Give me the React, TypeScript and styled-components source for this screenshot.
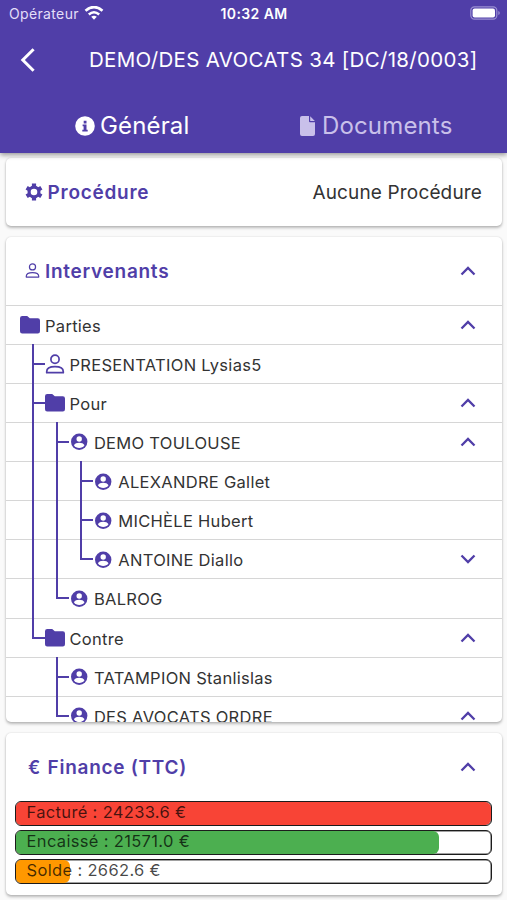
import React from "react";
import styled, { createGlobalStyle } from "styled-components";

const PURPLE = "#503ea8";

const GlobalStyle = createGlobalStyle`
  * { box-sizing: border-box; }
  html, body { margin: 0; padding: 0; }
  body {
    background: #fafafa;
    font-family: Inter, Roboto, sans-serif;
    color: #333;
    overflow: hidden;
  }
`;

const Screen = styled.div`
  width: 507px;
  height: 900px;
  display: flex;
  flex-direction: column;
  overflow: hidden;
`;

const Header = styled.header`
  flex: none;
  height: 152.5px;
  background: ${PURPLE};
  color: #fff;
  box-shadow: 0 2px 5px rgba(0, 0, 0, 0.4);
  z-index: 1;
`;

const StatusBar = styled.div`
  height: 28px;
  padding: 0 7px 0 9px;
  display: grid;
  grid-template-columns: 1fr auto 1fr;
  align-items: center;
`;

const Carrier = styled.div`
  display: flex;
  align-items: center;
  gap: 5px;
  margin-top: -1px;
  font-size: 14px;
  letter-spacing: 0.35px;
  color: #e4def8;
`;

const Clock = styled.div`
  padding-right: 1px;
  margin-top: -1px;
  font-size: 14px;
  font-weight: 600;
  letter-spacing: 0.4px;
`;

const Battery = styled.div`
  display: flex;
  justify-content: flex-end;
  margin-top: -2px;
`;

const TitleBar = styled.div`
  height: 63px;
  padding-left: 20px;
  display: flex;
  align-items: center;
`;

const BackButton = styled.button`
  width: 69px;
  height: 40px;
  padding: 0;
  border: 0;
  background: none;
  color: inherit;
  display: flex;
  align-items: center;
`;

const Title = styled.h1`
  margin: 0;
  font-size: 20.5px;
  font-weight: 400;
  letter-spacing: 0.31px;
  white-space: nowrap;
`;

const Tabs = styled.nav`
  display: grid;
  grid-template-columns: 1fr 1fr;
  height: 61px;
  padding-top: 8px;
`;

const Tab = styled.div<{ $active?: boolean; $gap: number; $shift: number }>`
  display: flex;
  align-items: center;
  gap: ${(p) => p.$gap}px;
  padding-left: ${(p) => p.$shift}px;
  font-size: 24px;
  letter-spacing: 0.15px;
  color: ${(p) => (p.$active ? "#fff" : "#c9c0ea")};
`;

const Content = styled.main`
  flex: 1;
  min-height: 0;
  padding: 5px 5px 6px 6px;
  display: flex;
  flex-direction: column;
  gap: 11px;
`;

const Card = styled.section<{ $height: number }>`
  flex: none;
  height: ${(p) => p.$height}px;
  background: #fff;
  border-radius: 5px;
  box-shadow: 0 2px 3px rgba(0, 0, 0, 0.25), 0 0 2px rgba(0, 0, 0, 0.14);
  overflow: hidden;
`;

const CardHeader = styled.div<{ $height: number }>`
  height: ${(p) => p.$height}px;
  padding: 0 19px;
  display: flex;
  align-items: center;
`;

const CardIcon = styled.span<{ $width: number }>`
  width: ${(p) => p.$width}px;
  display: flex;
  color: ${PURPLE};
`;

const EuroSign = styled.span`
  padding-left: 3px;
  font-size: 18px;
  font-weight: 600;
`;

const CardTitle = styled.h2`
  flex: 1;
  margin: 0;
  padding-top: 1px;
  font-size: 19px;
  font-weight: 600;
  letter-spacing: 0.72px;
  color: ${PURPLE};
`;

const CardValue = styled.span`
  padding: 1px 1px 0 0;
  font-size: 19px;
  letter-spacing: 0.15px;
`;

const ChevronBox = styled.span`
  width: 30px;
  margin-left: auto;
  padding-right: 1px;
  display: flex;
  justify-content: center;
  align-self: center;
  color: ${PURPLE};
`;

const TreeRow = styled.div<{ $level: number }>`
  height: 39.14px;
  border-top: 1px solid #d6d6d6;
  padding-left: ${(p) => (p.$level === 0 ? 14 : 25.5)}px;
  padding-right: 19px;
  display: flex;
`;

const Trunk = styled.span`
  flex: none;
  width: 24.4px;
  margin-top: -1px;
  border-left: 2px solid ${PURPLE};
`;

const TrunkGap = styled.span`
  flex: none;
  width: 24.4px;
`;

const Branch = styled.span`
  flex: none;
  width: 13px;
  margin-top: -1px;
  display: flex;
  flex-direction: column;
`;

const BranchTop = styled.span`
  height: 21px;
  border-left: 2px solid ${PURPLE};
  border-bottom: 2px solid ${PURPLE};
`;

const BranchBottom = styled.span`
  flex: 1;
  border-left: 2px solid ${PURPLE};
`;

const NodeIcon = styled.span`
  flex: none;
  width: 25px;
  height: 39px;
  display: flex;
  align-items: center;
  color: ${PURPLE};
`;

const NodeLabel = styled.span`
  font-size: 16.5px;
  line-height: 40px;
  letter-spacing: 0.29px;
  white-space: nowrap;
`;

const Bars = styled.div`
  margin-top: -1px;
  padding: 0 10px 0 9px;
  display: flex;
  flex-direction: column;
  gap: 4.3px;
`;

const Bar = styled.div<{ $color: string; $ratio: number }>`
  height: 25px;
  border: 1px solid #1c1c1c;
  box-shadow: inset 0 0 0 0.5px #444;
  border-radius: 6px;
  overflow: hidden;
  display: grid;
  & > * { grid-area: 1 / 1; }
  &::before {
    content: "";
    grid-area: 1 / 1;
    width: ${(p) => p.$ratio * 100}%;
    background: ${(p) => p.$color};
    border-radius: 4px 6px 6px 4px;
  }
`;

const BarLabel = styled.span`
  padding-left: 10.6px;
  font-size: 16.5px;
  line-height: 21px;
  letter-spacing: 0.33px;
  color: rgba(0, 0, 0, 0.72);
`;

const WifiIcon = () => (
  <svg width="20" height="15" viewBox="0 0 20 15" fill="none" stroke="#fff">
    <path d="M1.5 4.7 Q10 -2.5 18.5 4.7" strokeWidth="2.7" />
    <path d="M4.8 8.5 Q10 4.1 15.2 8.5" strokeWidth="2.5" />
    <path d="M7.2 10.8 Q10 8.7 12.8 10.8 L10 13.8Z" fill="#fff" stroke="none" />
  </svg>
);

const BatteryIcon = () => (
  <svg width="30" height="14" viewBox="0 0 30 14">
    <rect x="0.8" y="0.8" width="26" height="12.4" rx="3.6" fill="none" stroke="#9a8fd2" strokeWidth="1.2" />
    <rect x="2.6" y="2.5" width="22.4" height="9" rx="2" fill="#fff" />
    <path d="M28.3 5v4q1.5-.7 1.5-2t-1.5-2z" fill="#9a8fd2" />
  </svg>
);

const BackIcon = () => (
  <svg width="16" height="24" viewBox="0 0 16 24" fill="none" stroke="currentColor" strokeWidth="3">
    <path d="M13.6 1.2 2.8 12l10.8 10.8" />
  </svg>
);

const InfoIcon = () => (
  <svg width="20" height="20" viewBox="0 0 20 20">
    <circle cx="10" cy="10" r="9.8" fill="#fff" />
    <path d="M8.7 4.7h2.8v2.7H8.7zM7.6 8.5h3.9v5.2h1.2v1.7H7.3v-1.7h1.3v-3.5h-1z" fill={PURPLE} />
  </svg>
);

const FileIcon = () => (
  <svg width="15" height="20" viewBox="0 0 15 20" fill="currentColor">
    <path d="M2 0h7v5.2q0 1 1 1h5V18q0 2-2 2H2q-2 0-2-2V2q0-2 2-2z" />
    <path d="M10.2.2 14.8 5h-4.6z" />
  </svg>
);

const GearIcon = () => (
  <svg width="18" height="18" viewBox="0 0 18 18" fill="none" stroke="currentColor">
    <circle cx="9" cy="9" r="4.9" strokeWidth="3.2" />
    <path
      d="M9 3.4V.5M9 14.6v2.900M4.150 6.200 1.640 4.750M13.850 11.800l2.510 1.450M4.150 11.800l-2.510 1.450M13.850 6.200l2.510-1.450"
      strokeWidth="4.200"
    />
  </svg>
);

const PersonIcon = ({ size, stroke }: { size: number; stroke: number }) => (
  <svg width={size} height={size} viewBox="0 0 20 20" fill="none" stroke="currentColor" strokeWidth={stroke}>
    <circle cx="10" cy="5.2" r="4.1" />
    <path d="M1.700 18.700v-1c0-3.300 3-5 8.300-5s8.300 1.700 8.300 5v1z" strokeLinejoin="round" />
  </svg>
);

const FolderIcon = () => (
  <svg width="20" height="18" viewBox="0 0 20 18" fill="currentColor">
    <path d="M2.200 0h5l2.600 2.300h8q2.200 0 2.200 2.200v10.800q0 2.200-2.200 2.200H2.200Q0 17.500 0 15.300V2.200Q0 0 2.200 0z" />
  </svg>
);

const AccountIcon = () => (
  <svg width="20" height="18" viewBox="0 0 20 18">
    <circle cx="10.200" cy="8.700" r="8.200" fill="currentColor" />
    <circle cx="10.200" cy="6" r="2.700" fill="#fff" />
    <path d="M4.900 12.300c.6-1.900 3.200-2.600 5.300-2.600s4.700.7 5.300 2.600a6.400 6.400 0 0 1-10.600 0z" fill="#fff" />
  </svg>
);

const Chevron = ({ down }: { down?: boolean }) => (
  <ChevronBox>
    <svg width="16" height="10" viewBox="0 0 16 10" fill="none" stroke="currentColor" strokeWidth="2.300">
      <path d={down ? "M1.500 1.500 8 8l6.500-6.500" : "M1.500 8.500 8 2l6.500 6.500"} />
    </svg>
  </ChevronBox>
);

type NodeKind = "folder" | "person" | "account";

interface TreeNode {
  label: string;
  kind: NodeKind;
  level: number;
  last?: boolean;
  // One entry per ancestor column: whether its vertical line continues here.
  trunks?: boolean[];
  toggle?: "open" | "closed";
}

const nodes: TreeNode[] = [
  { label: "Parties", kind: "folder", level: 0, toggle: "open" },
  { label: "PRESENTATION Lysias5", kind: "person", level: 1 },
  { label: "Pour", kind: "folder", level: 1, toggle: "open" },
  { label: "DEMO TOULOUSE", kind: "account", level: 2, trunks: [true], toggle: "open" },
  { label: "ALEXANDRE Gallet", kind: "account", level: 3, trunks: [true, true] },
  { label: "MICHÈLE Hubert", kind: "account", level: 3, trunks: [true, true] },
  { label: "ANTOINE Diallo", kind: "account", level: 3, trunks: [true, true], last: true, toggle: "closed" },
  { label: "BALROG", kind: "account", level: 2, trunks: [true], last: true },
  { label: "Contre", kind: "folder", level: 1, last: true, toggle: "open" },
  { label: "TATAMPION Stanlislas", kind: "account", level: 2, trunks: [false] },
  { label: "DES AVOCATS ORDRE", kind: "account", level: 2, trunks: [false], last: true, toggle: "open" },
];

const kindIcons: Record<NodeKind, React.ReactNode> = {
  folder: <FolderIcon />,
  person: <PersonIcon size={20} stroke={1.7} />,
  account: <AccountIcon />,
};

const Node = ({ node }: { node: TreeNode }) => (
  <TreeRow $level={node.level}>
    {node.trunks?.map((on, i) => (on ? <Trunk key={i} /> : <TrunkGap key={i} />))}
    {node.level > 0 && (
      <Branch>
        <BranchTop />
        {!node.last && <BranchBottom />}
      </Branch>
    )}
    <NodeIcon>{kindIcons[node.kind]}</NodeIcon>
    <NodeLabel>{node.label}</NodeLabel>
    {node.toggle && <Chevron down={node.toggle === "closed"} />}
  </TreeRow>
);

const balances = [
  { label: "Facturé : 24233.6 €", color: "#f84436", ratio: 1 },
  { label: "Encaissé : 21571.0 €", color: "#4caf50", ratio: 0.89 },
  { label: "Solde : 2662.6 €", color: "#ff9800", ratio: 0.113 },
];

export default function App() {
  return (
    <>
      <GlobalStyle />
      <Screen>
        <Header>
          <StatusBar>
            <Carrier>
              Opérateur <WifiIcon />
            </Carrier>
            <Clock>10:32 AM</Clock>
            <Battery>
              <BatteryIcon />
            </Battery>
          </StatusBar>
          <TitleBar>
            <BackButton aria-label="Retour">
              <BackIcon />
            </BackButton>
            <Title>DEMO/DES AVOCATS 34 [DC/18/0003]</Title>
          </TitleBar>
          <Tabs>
            <Tab $active $gap={5} $shift={75}>
              <InfoIcon /> Général
            </Tab>
            <Tab $gap={7.5} $shift={46}>
              <FileIcon /> Documents
            </Tab>
          </Tabs>
        </Header>
        <Content>
          <Card $height={68}>
            <CardHeader $height={68}>
              <CardIcon $width={22.6}>
                <GearIcon />
              </CardIcon>
              <CardTitle>Procédure</CardTitle>
              <CardValue>Aucune Procédure</CardValue>
            </CardHeader>
          </Card>
          <Card $height={485}>
            <CardHeader $height={68}>
              <CardIcon $width={20}>
                <PersonIcon size={15} stroke={1.6} />
              </CardIcon>
              <CardTitle>Intervenants</CardTitle>
              <Chevron />
            </CardHeader>
            {nodes.map((n) => (
              <Node key={n.label} node={n} />
            ))}
          </Card>
          <Card $height={162}>
            <CardHeader $height={69}>
              <CardIcon $width={22.6}>
                <EuroSign>€</EuroSign>
              </CardIcon>
              <CardTitle>Finance (TTC)</CardTitle>
              <Chevron />
            </CardHeader>
            <Bars>
              {balances.map((b) => (
                <Bar key={b.label} $color={b.color} $ratio={b.ratio}>
                  <BarLabel>{b.label}</BarLabel>
                </Bar>
              ))}
            </Bars>
          </Card>
        </Content>
      </Screen>
    </>
  );
}
